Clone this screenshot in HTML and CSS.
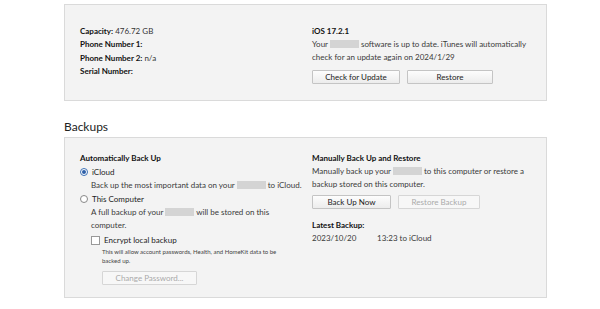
FILE: index.html
```html
<!DOCTYPE html>
<html>
<head>
  <title>Summary</title>
  <link rel="stylesheet" href="styles.css">
</head>
<body>
  <div class="page">
    <div class="panel top">
      <div class="col left">
        <p class="info"><b>Capacity:</b> 476.72 GB</p>
        <p class="info"><b>Phone Number 1:</b></p>
        <p class="info"><b>Phone Number 2:</b> n/a</p>
        <p class="info"><b>Serial Number:</b></p>
      </div>
      <div class="col right">
        <p class="title">iOS 17.2.1</p>
        <p class="text">Your <span class="blur"></span> software is up to date. iTunes will automatically check for an update again on 2024/1/29</p>
        <div class="buttons">
          <button class="btn w88">Check for Update</button>
          <button class="btn w86">Restore</button>
        </div>
      </div>
    </div>

    <h2 class="heading">Backups</h2>

    <div class="panel bottom">
      <div class="col left">
        <p class="title">Automatically Back Up</p>
        <div class="radio-row"><span class="radio on"></span>iCloud</div>
        <p class="text indent">Back up the most important data on your <span class="blur"></span> to iCloud.</p>
        <div class="radio-row"><span class="radio"></span>This Computer</div>
        <p class="text indent narrow">A full backup of your <span class="blur"></span> will be stored on this computer.</p>
        <div class="check-row"><span class="check"></span>Encrypt local backup</div>
        <p class="small">This will allow account passwords, Health, and HomeKit data to be backed up.</p>
        <button class="btn disabled w95">Change Password...</button>
      </div>
      <div class="col right">
        <p class="title">Manually Back Up and Restore</p>
        <p class="text">Manually back up your <span class="blur"></span> to this computer or restore a backup stored on this computer.</p>
        <div class="buttons tight">
          <button class="btn w79">Back Up Now</button>
          <button class="btn disabled w82">Restore Backup</button>
        </div>
        <p class="title latest">Latest Backup:</p>
        <p class="text"><span class="date">2023/10/20</span>13:23 to iCloud</p>
      </div>
    </div>
  </div>
</body>
</html>
```

FILE: styles.css
```css
body{
  margin: 0;
  background-color: #fff;
  font-family: 'Lato', 'Noto Sans', sans-serif;
  color: #222;
}

p{
  margin: 0;
}

.page{
  margin-left: 64px;
  width: 483px;
  padding-top: 4px;
}

.panel{
  display: flex;
  background-color: #f3f3f3;
  border: 1px solid #dadada;
  box-sizing: border-box;
  padding-left: 15px;
}

.panel.top{
  height: 97px;
  padding-top: 20px;
}

.panel.bottom{
  height: 161px;
  padding-top: 14px;
}

.col.left{
  width: 232px;
}

.col.right{
  width: 225px;
}

.info{
  font-size: 8px;
  line-height: 13.3px;
  color: #333;
}

.info b{
  font-weight: 700;
  color: #111;
}

.title{
  font-size: 8px;
  font-weight: 700;
  line-height: 13px;
  color: #111;
}

.text{
  font-size: 8px;
  line-height: 13px;
  color: #3a3a3a;
}

.indent{
  padding-left: 11px;
}

.narrow{
  width: 185px;
}

.blur{
  display: inline-block;
  width: 29px;
  height: 8px;
  background-color: #d4d4d4;
  vertical-align: -1px;
}

.buttons{
  display: flex;
  gap: 7px;
  margin-top: 6px;
}

.buttons.tight{
  margin-top: 4px;
}

.btn{
  height: 14px;
  padding: 0;
  font-family: inherit;
  font-size: 8px;
  color: #222;
  background: linear-gradient(#fdfdfd, #ececec);
  border: 1px solid #c4c4c4;
  border-radius: 1px;
}

.btn.disabled{
  color: #aaa;
  background: #f7f7f7;
  border-color: #d6d6d6;
}

.w88{ width: 88px; }
.w86{ width: 86px; }
.w95{ width: 95px; margin-left: 22px; margin-top: 4px; }
.w79{ width: 79px; }
.w82{ width: 82px; }

.heading{
  margin: 0;
  padding: 19px 0 3px 0;
  font-size: 12px;
  font-weight: 400;
  line-height: 14px;
  color: #222;
}

.radio-row, .check-row{
  display: flex;
  align-items: center;
  font-size: 8px;
  line-height: 14px;
  color: #222;
}

.radio{
  width: 6px;
  height: 6px;
  border: 1px solid #888;
  border-radius: 50%;
  background-color: #fff;
  margin-right: 4px;
  position: relative;
}

.radio.on{
  border-color: #3a6fb5;
}

.radio.on::after{
  content: "";
  position: absolute;
  left: 1px;
  top: 1px;
  width: 4px;
  height: 4px;
  border-radius: 50%;
  background-color: #2d5fa8;
}

.check-row{
  margin-left: 11px;
  margin-top: 1px;
}

.check{
  width: 7px;
  height: 7px;
  border: 1px solid #999;
  background-color: #fff;
  margin-right: 4px;
}

.small{
  font-size: 6px;
  line-height: 9px;
  color: #444;
  padding-left: 22px;
  width: 190px;
}

.latest{
  margin-top: 10px;
}

.date{
  display: inline-block;
  width: 65px;
}
```
